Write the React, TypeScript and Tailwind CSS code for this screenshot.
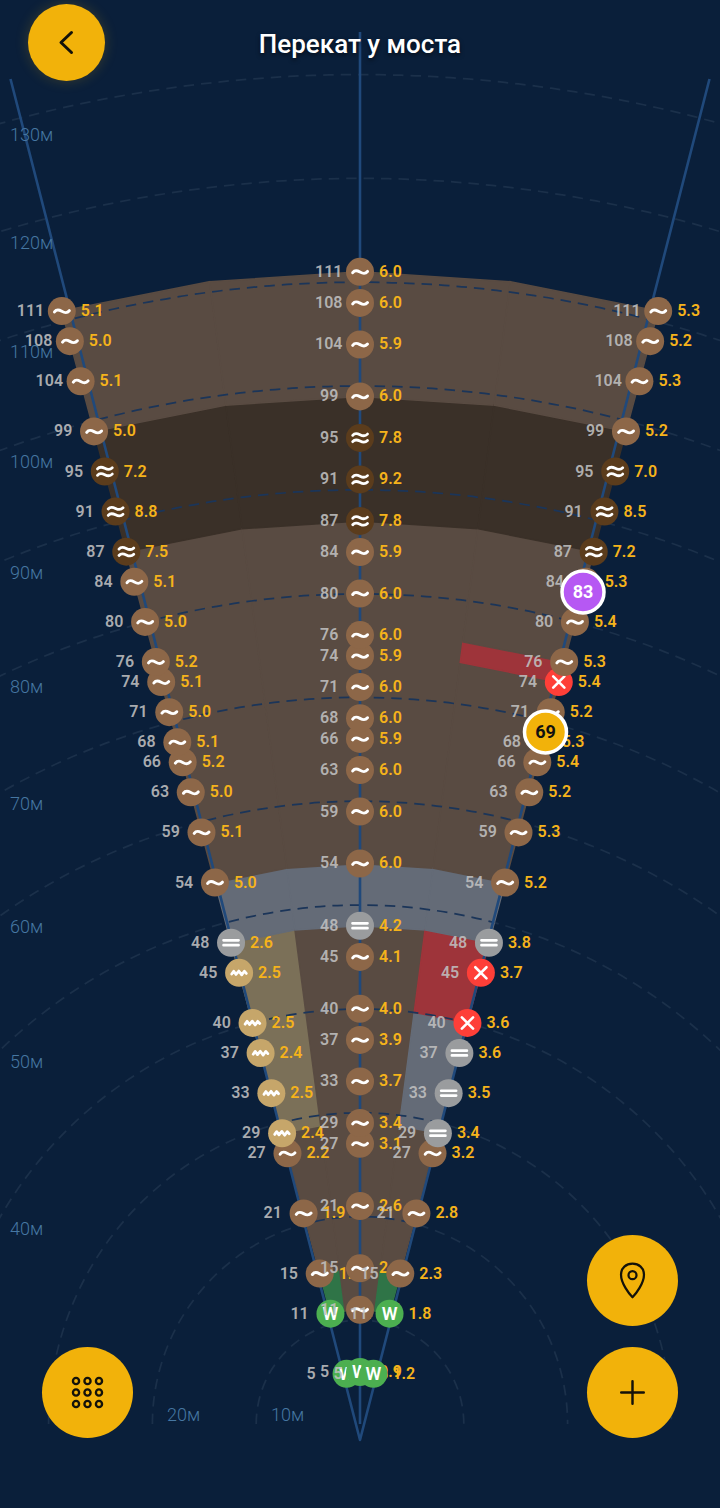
import type { ReactNode } from 'react';

type Kind = 'sand' | 'rock' | 'flat' | 'shell' | 'snag' | 'weed';
type Sample = [distance: number, depth: string, kind: Kind];

const ORIGIN = { x: 360, y: 1424 };
const PX_PER_METER = 10.38;

const MARKER_COLORS: Record<Kind, string> = {
  sand: '#8d6748',
  rock: '#5b3c1c',
  flat: '#9a9c9e',
  shell: '#c6a66a',
  snag: '#fe3f38',
  weed: '#4caf50',
};

const ZONE_COLORS: Record<Kind, string> = {
  sand: '#594b42',
  rock: '#3a3028',
  flat: '#646b77',
  shell: '#7b7058',
  snag: '#9e343a',
  weed: '#2f7447',
};

const LEFT: Sample[] = [
  [5, '0.8', 'weed'],
  [11, '1.4', 'weed'],
  [15, '1.7', 'sand'],
  [21, '1.9', 'sand'],
  [27, '2.2', 'sand'],
  [29, '2.4', 'shell'],
  [33, '2.5', 'shell'],
  [37, '2.4', 'shell'],
  [40, '2.5', 'shell'],
  [45, '2.5', 'shell'],
  [48, '2.6', 'flat'],
  [54, '5.0', 'sand'],
  [59, '5.1', 'sand'],
  [63, '5.0', 'sand'],
  [66, '5.2', 'sand'],
  [68, '5.1', 'sand'],
  [71, '5.0', 'sand'],
  [74, '5.1', 'sand'],
  [76, '5.2', 'sand'],
  [80, '5.0', 'sand'],
  [84, '5.1', 'sand'],
  [87, '7.5', 'rock'],
  [91, '8.8', 'rock'],
  [95, '7.2', 'rock'],
  [99, '5.0', 'sand'],
  [104, '5.1', 'sand'],
  [108, '5.0', 'sand'],
  [111, '5.1', 'sand'],
];

const CENTER: Sample[] = [
  [5, '0.9', 'weed'],
  [11, '1.1', 'sand'],
  [15, '2.1', 'sand'],
  [21, '2.6', 'sand'],
  [27, '3.1', 'sand'],
  [29, '3.4', 'sand'],
  [33, '3.7', 'sand'],
  [37, '3.9', 'sand'],
  [40, '4.0', 'sand'],
  [45, '4.1', 'sand'],
  [48, '4.2', 'flat'],
  [54, '6.0', 'sand'],
  [59, '6.0', 'sand'],
  [63, '6.0', 'sand'],
  [66, '5.9', 'sand'],
  [68, '6.0', 'sand'],
  [71, '6.0', 'sand'],
  [74, '5.9', 'sand'],
  [76, '6.0', 'sand'],
  [80, '6.0', 'sand'],
  [84, '5.9', 'sand'],
  [87, '7.8', 'rock'],
  [91, '9.2', 'rock'],
  [95, '7.8', 'rock'],
  [99, '6.0', 'sand'],
  [104, '5.9', 'sand'],
  [108, '6.0', 'sand'],
  [111, '6.0', 'sand'],
];

const RIGHT: Sample[] = [
  [5, '1.2', 'weed'],
  [11, '1.8', 'weed'],
  [15, '2.3', 'sand'],
  [21, '2.8', 'sand'],
  [27, '3.2', 'sand'],
  [29, '3.4', 'flat'],
  [33, '3.5', 'flat'],
  [37, '3.6', 'flat'],
  [40, '3.6', 'snag'],
  [45, '3.7', 'snag'],
  [48, '3.8', 'flat'],
  [54, '5.2', 'sand'],
  [59, '5.3', 'sand'],
  [63, '5.2', 'sand'],
  [66, '5.4', 'sand'],
  [68, '5.3', 'sand'],
  [71, '5.2', 'sand'],
  [74, '5.4', 'snag'],
  [76, '5.3', 'sand'],
  [80, '5.4', 'sand'],
  [84, '5.3', 'sand'],
  [87, '7.2', 'rock'],
  [91, '8.5', 'rock'],
  [95, '7.0', 'rock'],
  [99, '5.2', 'sand'],
  [104, '5.3', 'sand'],
  [108, '5.2', 'sand'],
  [111, '5.3', 'sand'],
];

// each ray owns a slice of the fan; angles are measured from the vertical
const RAYS = [
  { id: 'left', angle: -15, edges: [-15, -7.5], samples: LEFT },
  { id: 'center', angle: 0, edges: [-7.5, 0, 7.5], samples: CENTER },
  { id: 'right', angle: 15, edges: [7.5, 15], samples: RIGHT },
];

const RINGS = [10, 20, 30, 40, 50, 60, 70, 80, 90, 100, 110, 120, 130];

const RING_LABELS = [
  { text: '130м', x: 10, y: 141 },
  { text: '120м', x: 10, y: 249 },
  { text: '110м', x: 10, y: 358 },
  { text: '100м', x: 10, y: 468 },
  { text: '90м', x: 10, y: 579 },
  { text: '80м', x: 10, y: 693 },
  { text: '70м', x: 10, y: 810 },
  { text: '60м', x: 10, y: 933 },
  { text: '50м', x: 10, y: 1068 },
  { text: '40м', x: 10, y: 1235 },
  { text: '20м', x: 167, y: 1421 },
  { text: '10м', x: 271, y: 1421 },
];

function polar(distance: number, angle: number) {
  const rad = (angle * Math.PI) / 180;
  const r = distance * PX_PER_METER;
  return { x: ORIGIN.x + r * Math.sin(rad), y: ORIGIN.y - r * Math.cos(rad) };
}

function zonePoints(from: number, to: number, edges: number[]) {
  const outer = edges.map((a) => polar(to, a));
  const inner = [...edges].reverse().map((a) => polar(from, a));
  return [...outer, ...inner].map((p) => `${p.x},${p.y}`).join(' ');
}

// the bottom type of a sample is valid up to the next sample on the same ray
function getZones(samples: Sample[]) {
  const zones: { from: number; to: number; kind: Kind }[] = [];
  for (let i = 1; i < samples.length - 1; i++) {
    const [from, , kind] = samples[i];
    const to = samples[i + 1][0];
    const last = zones[zones.length - 1];
    if (last && last.kind === kind) {
      last.to = to;
    } else {
      zones.push({ from, to, kind });
    }
  }
  return zones;
}

function ringPath(distance: number) {
  const r = distance * PX_PER_METER;
  return `M${ORIGIN.x - r} ${ORIGIN.y} A${r} ${r} 0 0 1 ${ORIGIN.x + r} ${ORIGIN.y}`;
}

function MarkerIcon({ kind }: { kind: Kind }) {
  switch (kind) {
    case 'sand':
      return <path d="M-7.3 0.9 C-5 -2.2 -2.8 -1.3 0 0.2 S5 2.6 7.5 -0.4" strokeWidth="3" />;
    case 'rock':
      return (
        <>
          <path d="M-7.3 -2.6 C-5 -5.4 -2.8 -4.6 0 -3.2 S5 -1.2 7.5 -3.8" strokeWidth="2.8" />
          <path d="M-7.3 3.8 C-5 1 -2.8 1.8 0 3.2 S5 5.2 7.5 2.6" strokeWidth="2.8" />
        </>
      );
    case 'flat':
      return <path d="M-7.5 -2.4 H7.5 M-7.5 2.4 H7.5" strokeWidth="2.7" />;
    case 'shell':
      return <path d="M-7.4 1.2 L-5.4 -1.6 L-3.1 1.6 L-0.3 -1.8 L2.6 2 L5.2 -1.6 L7.2 0.6" strokeWidth="2.8" />;
    case 'snag':
      return <path d="M-5.6 -5.6 L5.6 5.6 M5.6 -5.6 L-5.6 5.6" strokeWidth="2.6" />;
    case 'weed':
      return (
        <text y="6" textAnchor="middle" stroke="none" className="fill-white text-[18px] font-semibold">
          W
        </text>
      );
  }
}

function Marker({ x, y, sample }: { x: number; y: number; sample: Sample }) {
  const [distance, depth, kind] = sample;
  return (
    <g transform={`translate(${x} ${y})`}>
      <circle r="14" fill={MARKER_COLORS[kind]} />
      <g fill="none" stroke="#fff" strokeLinecap="round" strokeLinejoin="round">
        <MarkerIcon kind={kind} />
      </g>
      <text x={distance > 99 ? -45 : -40} y="5" fillOpacity="0.88" className="fill-[#c0c0c0] text-[16px] font-semibold">
        {distance}
      </text>
      <text x="19" y="5" className="fill-[#f5b31b] text-[16px] font-semibold">
        {depth}
      </text>
    </g>
  );
}

function Badge({ x, y, value, fill, color }: { x: number; y: number; value: number; fill: string; color: string }) {
  return (
    <g transform={`translate(${x} ${y})`}>
      <circle r="21" fill={fill} stroke="#fff" strokeWidth="3.5" />
      <text y="6" textAnchor="middle" fill={color} className="text-[18px] font-bold">
        {value}
      </text>
    </g>
  );
}

function RoundButton({ label, children }: { label: string; children: ReactNode }) {
  return (
    <button
      type="button"
      aria-label={label}
      className="flex size-[91px] cursor-pointer items-center justify-center rounded-full bg-[#f2b20a] text-[#14120a]"
    >
      {children}
    </button>
  );
}

function SonarChart() {
  return (
    <svg viewBox="0 0 720 1508" className="block h-auto w-full" role="img" aria-label="Карта дна">
      <defs>
        <clipPath id="fan">
          {RAYS.map((ray) => (
            <polygon key={ray.id} points={zonePoints(11, 111, ray.edges)} />
          ))}
        </clipPath>
      </defs>

      <g fill="none" stroke="#1b304a" strokeWidth="1.75" strokeDasharray="10.5 7">
        {RINGS.map((d) => (
          <path key={d} d={ringPath(d)} />
        ))}
      </g>

      {/* Bottom zones, the stroke hides the seams between slices */}
      {RAYS.map((ray) =>
        getZones(ray.samples).map((zone) => (
          <polygon
            key={`${ray.id}-${zone.from}`}
            points={zonePoints(zone.from, zone.to, ray.edges)}
            fill={ZONE_COLORS[zone.kind]}
            stroke={ZONE_COLORS[zone.kind]}
            strokeWidth="1.5"
          />
        )),
      )}

      <g fill="none" stroke="#1b3559" strokeWidth="1.75" strokeDasharray="10.5 7" clipPath="url(#fan)">
        {RINGS.map((d) => (
          <path key={d} d={ringPath(d)} />
        ))}
      </g>

      <g fill="none" stroke="#20497b" strokeWidth="2.6" strokeLinejoin="round">
        <path d="M10.5 79 L360 1440 L709.5 79" />
        <path d="M360 32 V1424" />
      </g>

      <g className="fill-[#4677a2] text-[18px] font-light">
        {RING_LABELS.map((l) => (
          <text key={l.text} x={l.x} y={l.y}>
            {l.text}
          </text>
        ))}
      </g>

      {RAYS.map((ray) => (
        <g key={ray.id}>
          {ray.samples.map((sample) => {
            const p = polar(sample[0], ray.angle);
            return <Marker key={sample[0]} x={p.x} y={p.y} sample={sample} />;
          })}
        </g>
      ))}

      <Badge x={583} y={592} value={83} fill="#b658f3" color="#fff" />
      <Badge x={545.5} y={732} value={69} fill="#f2b20a" color="#111" />
    </svg>
  );
}

export default function App() {
  return (
    <div className="min-h-screen bg-[#0a1f3a] font-[Roboto,sans-serif]">
      <main className="relative">
        <SonarChart />

        {/* Header */}
        <header className="absolute inset-x-0 top-0 grid grid-cols-[1fr_auto_1fr] items-center px-7 pt-1">
          <button
            type="button"
            aria-label="Назад"
            className="flex size-[77px] cursor-pointer items-center justify-center rounded-full bg-[#f2b20a] text-[#14120a] shadow-[0_0_14px_rgba(242,178,10,0.2)]"
          >
            <svg width="29" height="29" viewBox="0 0 29 29" fill="none" stroke="currentColor" strokeWidth="3" strokeLinecap="round" strokeLinejoin="round">
              <path d="M19.5 4.5 L9 14.5 L19.5 24.5" />
            </svg>
          </button>
          <h1 className="pt-1 text-[26px] font-medium text-white [text-shadow:0_2px_4px_rgba(0,0,0,0.6)]">Перекат у моста</h1>
        </header>

        {/* Actions */}
        <div className="absolute inset-x-0 bottom-0 flex items-end justify-between px-[42px] pb-[70px]">
          <RoundButton label="Меню">
            <svg width="41" height="41" viewBox="0 0 40 40" fill="none" stroke="currentColor" strokeWidth="2.3">
              {[8.8, 20, 31.2].map((cy) =>
                [8.8, 20, 31.2].map((cx) => <circle key={`${cx}-${cy}`} cx={cx} cy={cy} r="3" />),
              )}
            </svg>
          </RoundButton>
          <div className="flex flex-col gap-[21px]">
            <RoundButton label="Точка">
              <svg width="41" height="41" viewBox="0 0 40 40" fill="none" stroke="currentColor" strokeWidth="2.2" strokeLinejoin="round">
                <path d="M20 36.4 C17 33.4 8.8 23 8.8 14.4 C8.8 7.6 13.8 3.6 20 3.6 S31.2 7.6 31.2 14.4 C31.2 23 23 33.4 20 36.4 Z" />
                <circle cx="20" cy="14.8" r="3.9" />
              </svg>
            </RoundButton>
            <RoundButton label="Добавить">
              <svg width="41" height="41" viewBox="0 0 40 40" fill="none" stroke="currentColor" strokeWidth="2.4" strokeLinecap="round">
                <path d="M20 9 V31 M9 20 H31" />
              </svg>
            </RoundButton>
          </div>
        </div>
      </main>
    </div>
  );
}
